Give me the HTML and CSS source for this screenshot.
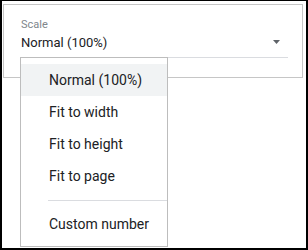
FILE: index.html
```html
<!DOCTYPE html>
<html>
<head>
    <meta charset="UTF-8">
    <meta name="viewport" content="width=device-width, initial-scale=1.0">
    <title>Scale</title>
    <link rel="stylesheet" href="styles.css">
</head>
<body>

    <div class="frame">
        <div class="panel">
            <div class="field">
                <div class="fieldLabel">Scale</div>
                <div class="fieldValue">
                    <span>Normal (100%)</span>
                    <svg class="arrow" width="7" height="4" viewBox="0 0 7 4"><path d="M0 0h7L3.5 4z" fill="#5f6368"/></svg>
                </div>
            </div>
        </div>

        <!-- open dropdown -->
        <div class="menu">
            <div class="menuItem selected">Normal (100%)</div>
            <div class="menuItem">Fit to width</div>
            <div class="menuItem">Fit to height</div>
            <div class="menuItem">Fit to page</div>
            <div class="menuDivider"></div>
            <div class="menuItem">Custom number</div>
        </div>
    </div>

</body>
</html>
```

FILE: styles.css
```css
body {
    margin: 0;
    padding: 0;
    font-family: Roboto, "Liberation Sans", Arial, sans-serif;
    background-color: #fff;
}

.frame {
    position: relative;
    width: 308px;
    height: 250px;
    box-sizing: border-box;
    border: 2px solid #000;
    border-top-width: 1px;
    padding: 3px 3px 0 1px;
    background-color: #fff;
}

.panel {
    height: 74px;
    box-sizing: border-box;
    border: 1px solid #c6c6c6;
    padding: 13px 0 0 17px;
}

.field {
    width: 267px;
}

.fieldLabel {
    font-size: 11px;
    line-height: 14px;
    color: #80868b;
}

.fieldValue {
    display: flex;
    justify-content: space-between;
    align-items: center;
    margin-top: 2px;
    height: 23px;
    padding-right: 8px;
    border-bottom: 1px solid #dadce0;
    font-size: 13px;
    line-height: 18px;
    color: #202124;
    box-sizing: content-box;
}

.fieldValue span {
    align-self: flex-start;
}

.arrow {
    display: block;
    margin-top: -8px;
}

.menu {
    position: absolute;
    left: 18px;
    top: 56px;
    width: 148px;
    height: 190px;
    box-sizing: border-box;
    border: 1px solid #bdbdbd;
    padding: 6px 0;
    background-color: #fff;
}

.menuItem {
    height: 32px;
    line-height: 32px;
    padding-left: 28px;
    font-size: 14px;
    color: #202124;
}

.selected {
    background-color: #f1f3f4;
}

.menuDivider {
    height: 1px;
    margin: 8px 0 7px 27px;
    background-color: #dadce0;
}
```
